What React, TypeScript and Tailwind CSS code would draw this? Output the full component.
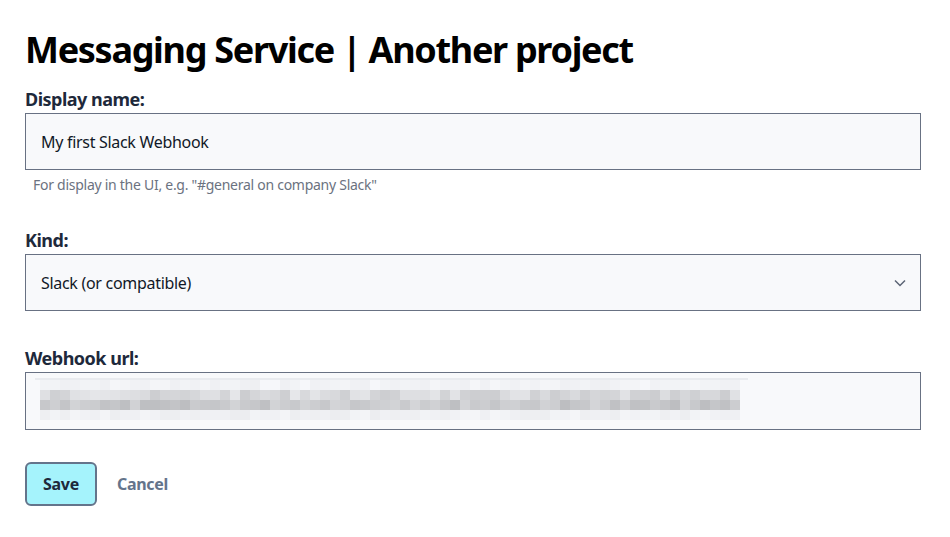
import React from "react";

const font = { fontFamily: '"Noto Sans", "Open Sans", sans-serif' };

function Mosaic() {
  const cols = 70;
  const rows: string[][] = [];
  let seed = 7;
  const rnd = () => {
    seed = (seed * 9301 + 49297) % 233280;
    return seed / 233280;
  };
  const ranges: [number, number][] = [
    [238, 246],
    [204, 230],
    [188, 212],
    [236, 244],
  ];
  for (let r = 0; r < 4; r++) {
    const row: string[] = [];
    for (let c = 0; c < cols; c++) {
      const [lo, hi] = ranges[r];
      const v = Math.round(lo + rnd() * (hi - lo));
      row.push(`rgb(${v},${v + 1},${v + 4})`);
    }
    rows.push(row);
  }
  return (
    <div className="flex flex-col pl-[9px] pt-[5px]">
      <div className="h-[2px] w-[713px] bg-[#e9ebef]" />
      <div className="flex flex-col pl-[5px]">
        {rows.map((row, r) => (
          <div key={r} className="flex h-[10px]">
            {row.map((c, i) => (
              <div key={i} className="h-[10px] w-[10px]" style={{ background: c }} />
            ))}
          </div>
        ))}
      </div>
    </div>
  );
}

export default function App() {
  return (
    <div className="min-h-[537px] w-[950px] bg-white px-[25px] pt-[28px]" style={font}>
      <h1 className="text-[36px] font-bold leading-[44px] tracking-[-1.3px] text-black">
        Messaging Service | Another project
      </h1>

      <div className="mt-[13px] flex flex-col">
        <label className="text-[18px] font-bold leading-[28px] tracking-[-0.5px] text-[#1e293b]">Display name:</label>
        <div className="flex h-[57px] w-[896px] items-center border border-[#687183] bg-[#f8f9fb] px-[15px] text-[16px] tracking-[-0.3px] text-[#111827]">
          My first Slack Webhook
        </div>
        <div className="mt-[5px] pl-[8px] text-[14px] leading-[20px] tracking-[-0.27px] text-[#6b7280]">
          For display in the UI, e.g. "#general on company Slack"
        </div>
      </div>

      <div className="mt-[31px] flex flex-col">
        <label className="text-[18px] font-bold leading-[28px] tracking-[-0.5px] text-[#1e293b]">Kind:</label>
        <div className="flex h-[57px] w-[896px] items-center justify-between border border-[#687183] bg-[#f8f9fb] pl-[15px] pr-[14px] text-[16px] tracking-[-0.3px] text-[#111827]">
          <span>Slack (or compatible)</span>
          <svg width="12" height="8" viewBox="0 0 12 8" fill="none">
            <path d="M1 1.5 6 6.5 11 1.5" stroke="#5b6475" strokeWidth="1.5" />
          </svg>
        </div>
      </div>

      <div className="mt-[33px] flex flex-col">
        <label className="text-[18px] font-bold leading-[28px] tracking-[-0.5px] text-[#1e293b]">Webhook url:</label>
        <div className="h-[58px] w-[896px] border border-[#687183] bg-[#f8f9fb]">
          <Mosaic />
        </div>
      </div>

      <div className="mt-[32px] flex items-center gap-[20px]">
        <button className="h-[44px] w-[72px] rounded-[6px] border-2 border-[#64748b] bg-[#a5f3fc] text-[16px] font-bold tracking-[-0.3px] text-[#1e293b]">
          Save
        </button>
        <button className="text-[16px] font-bold tracking-[-0.3px] text-[#64748b]">Cancel</button>
      </div>
    </div>
  );
}
